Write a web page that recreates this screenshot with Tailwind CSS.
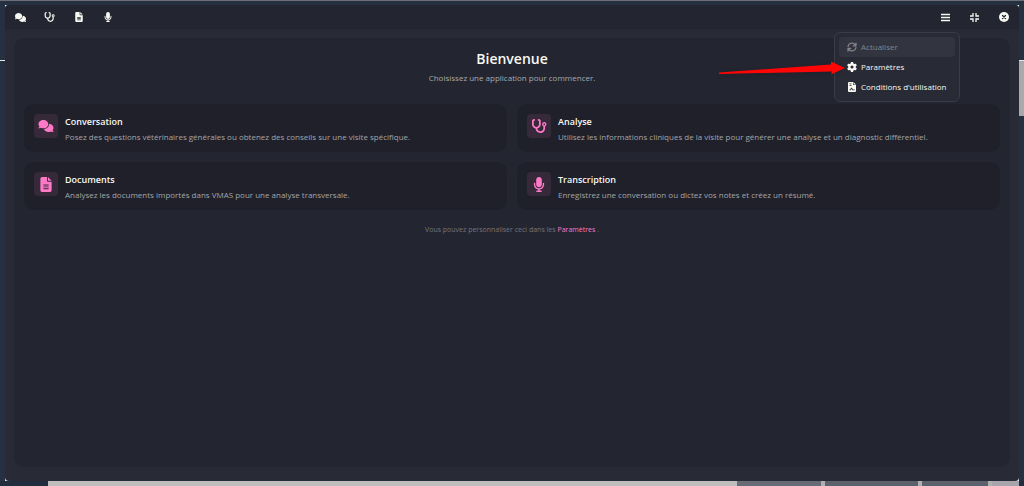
<!DOCTYPE html>
<html lang="fr">
  <head>
    <meta charset="UTF-8" />
    <meta name="viewport" content="width=device-width, initial-scale=1.0">
    <title>Bienvenue</title>
    <script src="https://cdn.jsdelivr.net/npm/@tailwindcss/browser@4"></script>
  </head>
  <body class="bg-[#253040] text-[#f8f8f2] font-['Open_Sans','Noto_Sans',sans-serif]">

    <!-- Shared icons -->
    <svg class="hidden" xmlns="http://www.w3.org/2000/svg">
      <symbol id="icon-comments" viewBox="0 0 640 512">
        <path d="M208 352c114.900 0 208-78.800 208-176S322.900 0 208 0S0 78.800 0 176c0 38.600 14.700 74.300 39.600 103.400c-3.500 9.400-8.700 17.700-14.200 24.700c-4.800 6.200-9.700 11-13.300 14.300c-1.800 1.600-3.300 2.900-4.300 3.700l-1.300 1C1 327.200-1.400 334.400.8 340.900S9.100 352 16 352c21.800 0 43.800-5.600 62.100-12.500c9.200-3.500 17.800-7.400 25.300-11.400C134.100 343.300 169.800 352 208 352z" />
        <path d="M448 176c0 112.300-99.100 196.900-216.500 207C255.800 457.400 336.400 512 432 512c38.200 0 73.900-8.700 104.700-23.900c7.500 4 16 7.900 25.200 11.400c18.300 6.900 40.300 12.500 62.100 12.500c6.900 0 13.100-4.500 15.200-11.100c2.100-6.600-.2-13.800-5.800-17.900c-8-6-14-12-18.800-19c-5.500-7-10.700-15-14.200-24.600c24.900-29 39.600-64.700 39.600-103.400c0-92.800-84.900-168.900-192.600-175.500c.3 5 .4 10.100.4 15.500z" />
      </symbol>
      <symbol id="icon-stethoscope" viewBox="0 0 576 512">
        <path d="M142.400 21.900c5.600 16.800-3.500 34.900-20.200 40.500L96 71.100V192c0 53 43 96 96 96s96-43 96-96V71.100l-26.100-8.700c-16.800-5.600-25.800-23.700-20.200-40.500s23.700-25.800 40.500-20.200l26.100 8.700C334.400 19.100 352 43.500 352 71.100V192c0 77.200-54.600 141.600-127.300 156.700C231 404.600 278.400 448 336 448c61.900 0 112-50.100 112-112V265.300c-28.300-12.300-48-40.500-48-73.300c0-44.200 35.800-80 80-80s80 35.800 80 80c0 32.800-19.700 61-48 73.300V336c0 97.200-78.800 176-176 176c-92.900 0-168.900-71.900-175.500-163.100C87.200 334.200 32 269.600 32 192V71.100c0-27.500 17.600-52 43.800-60.700l26.100-8.700c16.800-5.600 34.900 3.500 40.500 20.200zM480 224a32 32 0 1 0 0-64 32 32 0 1 0 0 64z" />
      </symbol>
      <symbol id="icon-file" viewBox="0 0 384 512">
        <path d="M64 0C28.700 0 0 28.700 0 64V448c0 35.300 28.700 64 64 64H320c35.300 0 64-28.700 64-64V160H256c-17.700 0-32-14.300-32-32V0H64zM256 0V128H384L256 0zM112 256H272c8.800 0 16 7.200 16 16s-7.200 16-16 16H112c-8.800 0-16-7.200-16-16s7.200-16 16-16zm0 64H272c8.800 0 16 7.200 16 16s-7.200 16-16 16H112c-8.800 0-16-7.200-16-16s7.200-16 16-16zm0 64H272c8.800 0 16 7.200 16 16s-7.200 16-16 16H112c-8.800 0-16-7.200-16-16s7.200-16 16-16z" />
      </symbol>
      <symbol id="icon-microphone" viewBox="0 0 384 512">
        <path d="M192 0C139 0 96 43 96 96V256c0 53 43 96 96 96s96-43 96-96V96c0-53-43-96-96-96zM64 216c0-13.300-10.700-24-24-24s-24 10.700-24 24v40c0 89.100 66.200 162.700 152 174.400V464H120c-13.300 0-24 10.700-24 24s10.700 24 24 24h144c13.300 0 24-10.700 24-24s-10.700-24-24-24H216V430.400c85.800-11.700 152-85.300 152-174.400V216c0-13.300-10.700-24-24-24s-24 10.700-24 24v40c0 70.700-57.300 128-128 128s-128-57.300-128-128V216z" />
      </symbol>
      <symbol id="icon-gear" viewBox="0 0 512 512">
        <path d="M495.900 166.600c3.200 8.700.5 18.400-6.400 24.600l-43.300 39.400c1.100 8.300 1.700 16.800 1.700 25.400s-.6 17.100-1.700 25.400l43.300 39.400c6.900 6.200 9.600 15.900 6.400 24.600c-4.400 11.900-9.700 23.300-15.800 34.300l-4.700 8.100c-6.600 11-14 21.400-22.100 31.200c-5.900 7.200-15.700 9.600-24.500 6.800l-55.700-17.700c-13.400 10.300-28.200 18.900-44 25.400l-12.500 57.100c-2 9.100-9 16.300-18.200 17.800c-13.800 2.300-28 3.500-42.500 3.500s-28.700-1.200-42.500-3.500c-9.200-1.500-16.200-8.700-18.200-17.800l-12.500-57.100c-15.800-6.500-30.600-15.100-44-25.400L83.100 425.900c-8.800 2.800-18.600.3-24.500-6.800c-8.100-9.800-15.500-20.200-22.100-31.200l-4.700-8.100c-6.100-11-11.400-22.400-15.800-34.300c-3.200-8.700-.5-18.400 6.400-24.600l43.300-39.400C64.600 273.100 64 264.600 64 256s.6-17.100 1.700-25.400L22.400 191.200c-6.900-6.200-9.600-15.900-6.400-24.600c4.400-11.900 9.700-23.300 15.800-34.300l4.700-8.100c6.600-11 14-21.400 22.100-31.200c5.900-7.200 15.700-9.600 24.500-6.800l55.700 17.700c13.400-10.300 28.200-18.900 44-25.400l12.500-57.100c2-9.100 9-16.300 18.200-17.800C227.300 1.200 241.500 0 256 0s28.700 1.200 42.500 3.500c9.200 1.500 16.200 8.700 18.200 17.800l12.500 57.100c15.800 6.500 30.600 15.100 44 25.400l55.700-17.700c8.800-2.800 18.600-.3 24.500 6.800c8.100 9.800 15.500 20.200 22.100 31.200l4.700 8.100c6.100 11 11.400 22.400 15.800 34.300zM256 336a80 80 0 1 0 0-160 80 80 0 1 0 0 160z" />
      </symbol>
    </svg>

    <div class="min-h-screen flex flex-col">
      <div class="h-px bg-[#6c6d78]"></div>

      <div class="flex-1 flex pt-1">
        <!-- Page behind the window, left edge -->
        <div class="w-[5px] flex flex-col">
          <div class="h-[55px]"></div>
          <div class="h-px bg-gray-200"></div>
        </div>

        <!-- Assistant window -->
        <div class="flex-1 flex bg-gray-200">
          <div class="flex-1 flex flex-col rounded bg-[#282a36]">
            <header class="h-6 pr-px flex justify-between rounded-t bg-[#232530]">
              <nav class="flex pl-px">
                <button class="w-[29px] flex items-center justify-center" aria-label="Conversation">
                  <svg class="w-[11px] h-[9px]" fill="currentColor"><use href="#icon-comments" /></svg>
                </button>
                <button class="w-[29px] flex items-center justify-center" aria-label="Analyse">
                  <svg class="w-[11px] h-[10px]" fill="currentColor"><use href="#icon-stethoscope" /></svg>
                </button>
                <button class="w-[29px] flex items-center justify-center" aria-label="Documents">
                  <svg class="w-2 h-[10px]" fill="currentColor"><use href="#icon-file" /></svg>
                </button>
                <button class="w-[29px] flex items-center justify-center" aria-label="Transcription">
                  <svg class="w-2 h-[10px]" fill="currentColor"><use href="#icon-microphone" /></svg>
                </button>
              </nav>

              <div class="flex">
                <div class="relative flex">
                  <button class="w-[29px] flex items-center justify-center" aria-label="Menu">
                    <svg class="w-[9px] h-[9px]" viewBox="0 0 9 9" fill="none" stroke="currentColor" stroke-width="1.300">
                      <path d="M0 1.500h9M0 4.500h9M0 7.500h9" />
                    </svg>
                  </button>

                  <!-- Dropdown menu -->
                  <div class="absolute z-10 right-0 top-[27px] w-[126px] p-1 flex flex-col rounded-md border border-[#3a3c47] bg-[#282a35] text-[8px] leading-5 whitespace-nowrap">
                    <button disabled class="h-5 px-2 flex items-center gap-1 rounded bg-[#32343f] text-[#85868c]">
                      <svg class="w-[10px] h-[10px]" viewBox="0 0 20 20" fill="none" stroke="currentColor" stroke-width="2.500" stroke-linecap="round" stroke-linejoin="round">
                        <path d="M2 9a8 8 0 0 1 14-4l2 2M18 2v5.500h-5.500M18 11a8 8 0 0 1-14 4l-2-2M2 18v-5.500h5.500" />
                      </svg>
                      <span>Actualiser</span>
                    </button>
                    <button class="h-5 px-2 flex items-center gap-1">
                      <svg class="w-[10px] h-[10px]" fill="currentColor"><use href="#icon-gear" /></svg>
                      <span>Paramètres</span>
                    </button>
                    <button class="h-5 px-2 flex items-center gap-1">
                      <svg class="w-[10px] h-[10px]" viewBox="0 0 20 20" fill="currentColor">
                        <path fill-rule="evenodd" d="M4 0h8v6h6v12a2 2 0 0 1-2 2H4a2 2 0 0 1-2-2V2a2 2 0 0 1 2-2zM13 0l5 5h-5zM5 3v1.500h4V3zM5 6v1.500h4V6zM5 16.500h2.500l1.500-3 1.500 3h5V15h-4l-1.500-3.500h-2L6.500 15H5z" />
                      </svg>
                      <span>Conditions d'utilisation</span>
                    </button>

                    <!-- Pointer to the settings entry -->
                    <svg class="absolute right-[114px] top-[27px] w-[126px] h-4 drop-shadow-sm" viewBox="0 0 126 16" fill="#ff0505">
                      <path d="M0 12.500L112 4.500V1.500L126 8L112 14.500L113 11.500L0 14z" />
                    </svg>
                  </div>
                </div>
                <button class="w-[29px] flex items-center justify-center" aria-label="Réduire">
                  <svg class="w-[9px] h-[9px]" viewBox="0 0 9 9" fill="none" stroke="currentColor" stroke-width="1.300">
                    <path d="M3 0v3H0M6 0v3h3M3 9V6H0M6 9V6h3" />
                  </svg>
                </button>
                <button class="w-[29px] flex items-center justify-center" aria-label="Fermer">
                  <svg class="w-[10px] h-[10px]" viewBox="0 0 20 20">
                    <circle cx="10" cy="10" r="10" fill="currentColor" />
                    <path d="M7 7l6 6M13 7l-6 6" stroke="#232530" stroke-width="2.500" stroke-linecap="round" />
                  </svg>
                </button>
              </div>
            </header>

            <main class="flex-1 mx-[9px] mt-[9px] mb-[14px] px-[10px] pt-3 rounded-[10px] bg-[#232530]">
              <div class="text-center">
                <h1 class="text-[14px] leading-[18px] font-semibold">Bienvenue</h1>
                <p class="mt-1 text-[8px] leading-3 text-[#a9aaac]">Choisissez une application pour commencer.</p>
              </div>

              <!-- Applications -->
              <div class="mt-5 grid grid-cols-2 gap-[10px]">
                <a href="#" class="h-12 p-[10px] flex gap-[7px] rounded-[10px] bg-[#1f202a]">
                  <span class="size-6 flex items-center justify-center rounded bg-[#35293a] text-[#ff79c6]">
                    <svg class="w-4 h-3" fill="currentColor"><use href="#icon-comments" /></svg>
                  </span>
                  <span class="flex flex-col">
                    <span class="text-[9px] leading-[15px] font-semibold">Conversation</span>
                    <span class="text-[8px] leading-[15px] text-[#a5a6a8]">Posez des questions vétérinaires générales ou obtenez des conseils sur une visite spécifique.</span>
                  </span>
                </a>
                <a href="#" class="h-12 p-[10px] flex gap-[7px] rounded-[10px] bg-[#1f202a]">
                  <span class="size-6 flex items-center justify-center rounded bg-[#35293a] text-[#ff79c6]">
                    <svg class="w-4 h-[14px]" fill="currentColor"><use href="#icon-stethoscope" /></svg>
                  </span>
                  <span class="flex flex-col">
                    <span class="text-[9px] leading-[15px] font-semibold">Analyse</span>
                    <span class="text-[8px] leading-[15px] text-[#a5a6a8]">Utilisez les informations cliniques de la visite pour générer une analyse et un diagnostic différentiel.</span>
                  </span>
                </a>
                <a href="#" class="h-12 p-[10px] flex gap-[7px] rounded-[10px] bg-[#1f202a]">
                  <span class="size-6 flex items-center justify-center rounded bg-[#35293a] text-[#ff79c6]">
                    <svg class="w-3 h-[15px]" fill="currentColor"><use href="#icon-file" /></svg>
                  </span>
                  <span class="flex flex-col">
                    <span class="text-[9px] leading-[15px] font-semibold">Documents</span>
                    <span class="text-[8px] leading-[15px] text-[#a5a6a8]">Analysez les documents importés dans VMAS pour une analyse transversale.</span>
                  </span>
                </a>
                <a href="#" class="h-12 p-[10px] flex gap-[7px] rounded-[10px] bg-[#1f202a]">
                  <span class="size-6 flex items-center justify-center rounded bg-[#35293a] text-[#ff79c6]">
                    <svg class="w-3 h-[15px]" fill="currentColor"><use href="#icon-microphone" /></svg>
                  </span>
                  <span class="flex flex-col">
                    <span class="text-[9px] leading-[15px] font-semibold">Transcription</span>
                    <span class="text-[8px] leading-[15px] text-[#a5a6a8]">Enregistrez une conversation ou dictez vos notes et créez un résumé.</span>
                  </span>
                </a>
              </div>

              <p class="mt-[14px] text-center text-[7px] leading-3 text-[#74757d]">
                Vous pouvez personnaliser ceci dans les <a href="#" class="text-[#ff79c6]">Paramètres</a> .
              </p>
            </main>
          </div>
        </div>

        <!-- Page behind the window, right edge -->
        <div class="w-[5px] flex flex-col">
          <div class="h-[55px]"></div>
          <div class="h-px bg-gray-200"></div>
          <div class="h-[55px] bg-[#a9a9a9]"></div>
        </div>
      </div>

      <!-- Page behind the window, bottom edge -->
      <div class="h-[5px] flex pr-[5px] bg-[#222c3f]">
        <div class="w-12"></div>
        <div class="flex-1 bg-[#bdbdbd]"></div>
        <div class="w-[84px] bg-[#666b75]"></div>
        <div class="w-1 bg-[#b0b0b0]"></div>
        <div class="w-[93px] bg-[#5b616d]"></div>
        <div class="w-1 bg-[#b0b0b0]"></div>
        <div class="w-[66px] bg-[#5b616d]"></div>
        <div class="w-1 bg-[#b0b0b0]"></div>
        <div class="w-[27px] bg-[#a5a5ab]"></div>
      </div>
    </div>
  </body>
</html>
